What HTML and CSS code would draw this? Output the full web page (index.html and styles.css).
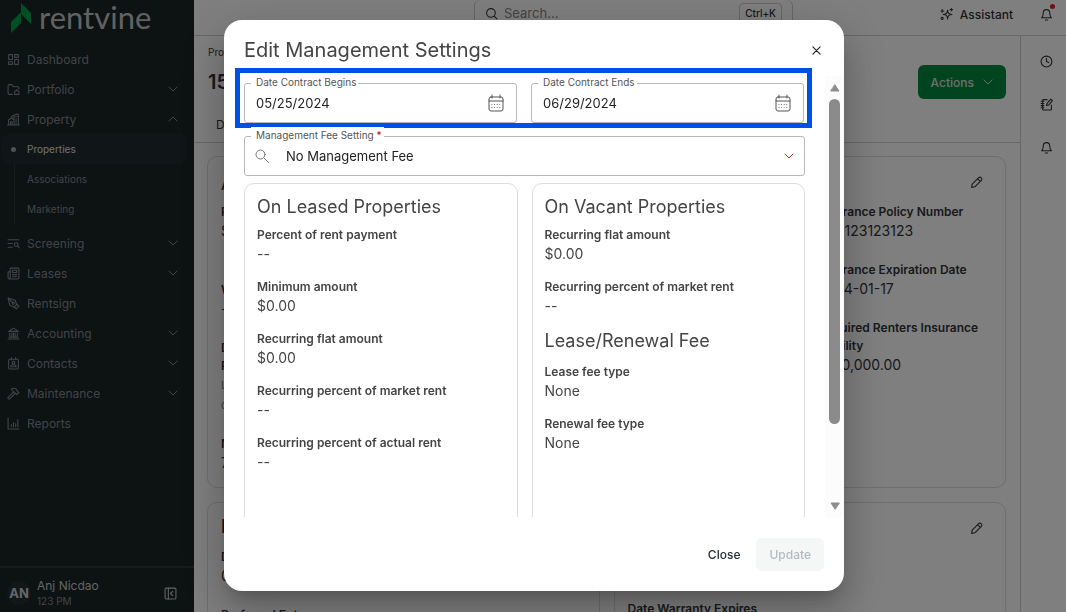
FILE: index.html
```
<!DOCTYPE html>
<html lang="en">
<head>
    <meta charset="UTF-8">
    <meta name="viewport" content="width=device-width, initial-scale=1.0">
    <title>Rentvine - Properties</title>
    <link rel="stylesheet" href="styles.css">
</head>
<body>
    <div class="app">
        <aside class="sidebar">
            <div class="logo">
                <svg class="logo-mark" width="22" height="32" viewBox="0 0 22 32"><path fill="#00a047" d="M0 20 10 10v11L0 31zM10 1l10 10v11L10 12z"/></svg>
                <span>rentvine</span>
            </div>
            <nav class="nav">
                <a class="nav-item" href="#">
                    <svg class="icon" viewBox="0 0 24 24"><path d="M3 3h7v9H3zM14 3h7v5h-7zM14 12h7v9h-7zM3 16h7v5H3z"/></svg>
                    <span>Dashboard</span>
                </a>
                <a class="nav-item" href="#">
                    <svg class="icon" viewBox="0 0 24 24"><path d="M10 21H4a2 2 0 0 1-2-2V5a2 2 0 0 1 2-2h5l3 4h8a2 2 0 0 1 2 2v2M14 16l4-3.500 4 3.500v5h-8z"/></svg>
                    <span>Portfolio</span>
                    <svg class="chevron" viewBox="0 0 10 6"><path d="m1 1 4 4 4-4"/></svg>
                </a>
                <a class="nav-item" href="#">
                    <svg class="icon" viewBox="0 0 24 24"><path d="M1 22h22M3 22V13l5-4 5 4v9M9 8V6l9-4 3 1v19M16 7h2M16 11h2M16 15h2M16 19h2M6.500 22v-6h3v6M13 5v6"/></svg>
                    <span>Property</span>
                    <svg class="chevron" viewBox="0 0 10 6"><path d="m1 5 4-4 4 4"/></svg>
                </a>
                <div class="subnav">
                    <a class="subnav-item active" href="#">Properties</a>
                    <a class="subnav-item" href="#">Associations</a>
                    <a class="subnav-item" href="#">Marketing</a>
                </div>
                <a class="nav-item" href="#">
                    <svg class="icon" viewBox="0 0 24 24"><path d="M2 5h20M2 12h8M2 19h8"/><circle cx="17" cy="14" r="3.500"/><path d="m19.500 16.500 3 3.500"/></svg>
                    <span>Screening</span>
                    <svg class="chevron" viewBox="0 0 10 6"><path d="m1 1 4 4 4-4"/></svg>
                </a>
                <a class="nav-item" href="#">
                    <svg class="icon" viewBox="0 0 24 24"><path d="M6 2h14a2 2 0 0 1 2 2v16a2 2 0 0 1-2 2H4a2 2 0 0 1-2-2V9h3M6 2v17a2 2 0 0 1-3 2M10 6h8v4h-8zM10 14h8M10 18h8"/></svg>
                    <span>Leases</span>
                    <svg class="chevron" viewBox="0 0 10 6"><path d="m1 1 4 4 4-4"/></svg>
                </a>
                <a class="nav-item" href="#">
                    <svg class="icon" viewBox="0 0 24 24"><path d="m2 2 13 4 3 8-5 5-8-4zM2 2l8 8M18 13l4 4-5 5-4-4"/><circle cx="11.500" cy="11.500" r="2"/></svg>
                    <span>Rentsign</span>
                </a>
                <a class="nav-item" href="#">
                    <svg class="icon" viewBox="0 0 24 24"><path d="M2 22h20M3 8l9-6 9 6zM5 11v8M9 11v8M12 11v8M15 11v8M19 11v8M4 19h16"/></svg>
                    <span>Accounting</span>
                    <svg class="chevron" viewBox="0 0 10 6"><path d="m1 1 4 4 4-4"/></svg>
                </a>
                <a class="nav-item" href="#">
                    <svg class="icon" viewBox="0 0 24 24"><rect x="3" y="4" width="18" height="18" rx="2"/><path d="M8 1v4M16 1v4M7 18c0-5 10-5 10 0z"/><circle cx="12" cy="10.500" r="2.500"/></svg>
                    <span>Contacts</span>
                    <svg class="chevron" viewBox="0 0 10 6"><path d="m1 1 4 4 4-4"/></svg>
                </a>
                <a class="nav-item" href="#">
                    <svg class="icon" viewBox="0 0 24 24"><path d="m12 9-9.500 9.500a2 2 0 0 0 3 3L15 12M8 4c4-3 8-2 10 1l1 3 3 2-4 4-3-3-2-1-2-3c-1-2-2-2-3-3z"/></svg>
                    <span>Maintenance</span>
                    <svg class="chevron" viewBox="0 0 10 6"><path d="m1 1 4 4 4-4"/></svg>
                </a>
                <a class="nav-item" href="#">
                    <svg class="icon" viewBox="0 0 24 24"><path d="M2 2v20h20M8 18v-4M12 18V10M16 18v-6M20 18V5"/></svg>
                    <span>Reports</span>
                </a>
            </nav>
            <div class="user">
                <span class="avatar">AN</span>
                <div class="user-info">
                    <div class="user-name">Anj Nicdao</div>
                    <div class="user-time">123 PM</div>
                </div>
                <button class="icon-btn collapse" aria-label="Collapse menu">
                    <svg class="icon" viewBox="0 0 24 24"><rect x="2" y="2" width="20" height="20" rx="2"/><path d="M8 2v20M16 8l-4 4 4 4"/></svg>
                </button>
            </div>
        </aside>

        <div class="page">
            <header class="topbar">
                <div class="search">
                    <svg class="icon" viewBox="0 0 24 24"><circle cx="11" cy="11" r="8"/><path d="m17 17 5 5"/></svg>
                    <input type="search" placeholder="Search..." aria-label="Search">
                    <kbd>Ctrl+K</kbd>
                </div>
                <div class="topbar-right">
                    <button class="assistant">
                        <svg class="icon" viewBox="0 0 24 24"><path d="M14 4c.500 6 2 7.500 8 8-6 .500-7.500 2-8 8-.500-6-2-7.500-8-8 6-.500 7.500-2 8-8zM4 3v5M2 5.500h5M21 1v4M19 3h4"/><circle cx="4" cy="19" r="2"/></svg>
                        Assistant
                    </button>
                    <button class="icon-btn bell" aria-label="Notifications">
                        <svg class="icon" viewBox="0 0 24 24"><path d="M3 18c2-2 3-4 3-9a6 6 0 0 1 12 0c0 5 1 7 3 9zM10 22h4"/></svg>
                        <span class="dot"></span>
                    </button>
                </div>
            </header>
            <div class="workspace">
                <main class="main">
                    <div class="page-head">
                        <div class="crumbs">Properties</div>
                        <div class="title-row">
                            <h1>1543 Meadow Lane</h1>
                            <button class="actions">Actions
                                <svg class="chevron" viewBox="0 0 10 6"><path d="m1 1 4 4 4-4"/></svg>
                            </button>
                        </div>
                        <div class="tabs"><a href="#">Details</a></div>
                    </div>
                    <div class="cards">
                        <section class="card">
                            <h2>About</h2>
                            <dl>
                                <div class="type"><dt>Property Type</dt><dd>Single Family</dd></div>
                                <div><dt>Warranty</dt><dd>--</dd></div>
                                <div class="pets"><dt>Dogs and<br>Pets Allowed</dt><dd>Large dogs</dd><dd>cats</dd></div>
                                <div><dt>Notes</dt><dd>7 days</dd></div>
                            </dl>
                        </section>
                        <section class="card">
                            <dl class="second">
                                <div><dt>Insurance Policy Number</dt><dd>000123123123</dd></div>
                                <div><dt>Insurance Expiration Date</dt><dd>2024-01-17</dd></div>
                                <div><dt>Required Renters Insurance Liability</dt><dd>$100,000.00</dd></div>
                            </dl>
                            <button class="icon-btn edit" aria-label="Edit insurance">
                                <svg class="icon" viewBox="0 0 24 24"><path d="m3 21 1-6L16 3c3-3 8 2 5 5L9 20zM14 5l5 5"/></svg>
                            </button>
                        </section>
                        <section class="card card-low">
                            <h2>Building</h2>
                            <dl>
                                <div><dt>Date Acquired</dt><dd>01/01/2020</dd></div>
                                <div><dt>Preferred Entry</dt></div>
                            </dl>
                        </section>
                        <section class="card card-low">
                            <h2>Warranty</h2>
                            <dl class="warranty">
                                <div><dt>Provider</dt><dd>--</dd></div>
                                <div><dt>Date Warranty Expires</dt></div>
                            </dl>
                            <button class="icon-btn edit" aria-label="Edit warranty">
                                <svg class="icon" viewBox="0 0 24 24"><path d="m3 21 1-6L16 3c3-3 8 2 5 5L9 20zM14 5l5 5"/></svg>
                            </button>
                        </section>
                    </div>
                </main>
                <aside class="rail">
                    <button class="icon-btn" aria-label="History">
                        <svg class="icon" viewBox="0 0 24 24"><circle cx="12" cy="12" r="10"/><path d="M12 6v6l4 2"/></svg>
                    </button>
                    <button class="icon-btn" aria-label="Notes">
                        <svg class="icon" viewBox="0 0 24 24"><path d="M13 3H6a1 1 0 0 0-1 1v17a1 1 0 0 0 1 1h14a1 1 0 0 0 1-1v-8M2 6h5M2 10h5M2 14h5M2 18h5M12 14l1-4 7-8 3 3-7 8z"/></svg>
                    </button>
                    <button class="icon-btn" aria-label="Reminders">
                        <svg class="icon" viewBox="0 0 24 24"><path d="M3 18c2-2 3-4 3-9a6 6 0 0 1 12 0c0 5 1 7 3 9zM10 22h4"/></svg>
                    </button>
                </aside>
            </div>
        </div>
    </div>

    <div class="overlay">
        <div class="modal" role="dialog" aria-labelledby="modal-title">
            <div class="modal-header">
                <h2 id="modal-title">Edit Management Settings</h2>
                <button class="icon-btn close-x" aria-label="Close dialog">
                    <svg viewBox="0 0 10 10"><path d="m1 1 8 8M9 1 1 9"/></svg>
                </button>
            </div>
            <div class="modal-body">
                <form class="modal-content">
                    <div class="date-row">
                        <div class="field">
                            <label for="begins">Date Contract Begins</label>
                            <input type="text" id="begins" value="05/25/2024">
                            <svg class="calendar" viewBox="0 0 16 18"><rect x="1" y="3" width="14" height="14" rx="2"/><path d="M1 7h14M4 1v3M12 1v3"/><path class="dots" d="M4 10.500h8M4 13.500h8"/></svg>
                        </div>
                        <div class="field">
                            <label for="ends">Date Contract Ends</label>
                            <input type="text" id="ends" value="06/29/2024">
                            <svg class="calendar" viewBox="0 0 16 18"><rect x="1" y="3" width="14" height="14" rx="2"/><path d="M1 7h14M4 1v3M12 1v3"/><path class="dots" d="M4 10.500h8M4 13.500h8"/></svg>
                        </div>
                    </div>
                    <div class="field fee">
                        <label for="fee">Management Fee Setting <span class="required">*</span></label>
                        <svg class="magnifier" viewBox="0 0 14 14"><circle cx="5.500" cy="5.500" r="4.500"/><path d="m9 9 4.500 4.500"/></svg>
                        <select id="fee"><option>No Management Fee</option></select>
                        <svg class="chevron" viewBox="0 0 10 6"><path d="m1 1 4 4 4-4"/></svg>
                    </div>
                    <div class="panels">
                        <section class="panel">
                            <h3>On Leased Properties</h3>
                            <dl>
                                <div><dt>Percent of rent payment</dt><dd>--</dd></div>
                                <div><dt>Minimum amount</dt><dd>$0.00</dd></div>
                                <div><dt>Recurring flat amount</dt><dd>$0.00</dd></div>
                                <div><dt>Recurring percent of market rent</dt><dd>--</dd></div>
                                <div><dt>Recurring percent of actual rent</dt><dd>--</dd></div>
                            </dl>
                        </section>
                        <section class="panel">
                            <h3>On Vacant Properties</h3>
                            <dl>
                                <div><dt>Recurring flat amount</dt><dd>$0.00</dd></div>
                                <div><dt>Recurring percent of market rent</dt><dd>--</dd></div>
                            </dl>
                            <h3 class="renewal">Lease/Renewal Fee</h3>
                            <dl>
                                <div><dt>Lease fee type</dt><dd>None</dd></div>
                                <div><dt>Renewal fee type</dt><dd>None</dd></div>
                            </dl>
                        </section>
                    </div>
                </form>
                <div class="scrollbar">
                    <svg viewBox="0 0 10 8"><path d="M5 1 9 7H1z"/></svg>
                    <div class="track"><div class="thumb"></div></div>
                    <svg viewBox="0 0 10 8"><path d="M5 7 1 1h8z"/></svg>
                </div>
            </div>
            <div class="modal-footer">
                <button class="btn">Close</button>
                <button class="btn btn-update" disabled>Update</button>
            </div>
        </div>
    </div>
</body>
</html>
```

FILE: styles.css
```
* {
    box-sizing: border-box;
}
body {
    margin: 0;
    font-family: Inter, "Liberation Sans", sans-serif;
    font-size: 13px;
    color: #303336;
    background-color: #fff;
    overflow: hidden;
}
h1, h2, h3, dl, dd {
    margin: 0;
    font-weight: 400;
}
a {
    color: inherit;
    text-decoration: none;
}
button, input, select {
    font: inherit;
    color: inherit;
    border: 0;
    background: none;
    padding: 0;
}
svg {
    flex: none;
    fill: none;
    stroke: currentColor;
    stroke-linecap: round;
    stroke-linejoin: round;
}
.icon {
    width: 13px;
    height: 13px;
    stroke-width: 2;
}
.chevron {
    width: 10px;
    height: 6px;
    stroke-width: 1;
}
.icon-btn {
    display: flex;
    align-items: center;
    justify-content: center;
}
.app {
    display: flex;
    height: 100vh;
}

/* sidebar */
.sidebar {
    display: flex;
    flex-direction: column;
    flex: none;
    width: 194px;
    background-color: #1b2426;
    color: #818991;
}
.logo {
    display: flex;
    align-items: center;
    gap: 6px;
    height: 36px;
    padding: 0 11px;
    color: #c4c4c4;
    font: 31px/36px Lato, sans-serif;
}
.logo span {
    padding-bottom: 2px;
}
.logo-mark {
    stroke: none;
}
.nav {
    flex: 1;
    padding-top: 8px;
    font-size: 12px;
}
.nav-item {
    display: flex;
    align-items: center;
    gap: 7px;
    height: 30px;
    padding: 0 16px 0 7px;
}
.nav-item .chevron {
    margin-left: auto;
}
.subnav {
    position: relative;
    margin-bottom: 4px;
    font-size: 10px;
}
.subnav::before {
    content: '';
    position: absolute;
    top: 0;
    bottom: 0;
    left: 14px;
    border-left: 1px solid #30393c;
}
.subnav-item {
    position: relative;
    display: flex;
    align-items: center;
    height: 30px;
    padding-left: 27px;
}
.subnav-item.active {
    margin: 0 7px 0 1px;
    padding-left: 26px;
    border-radius: 8px;
    background-color: #202a2e;
    color: #e0e0e0;
}
.subnav-item.active::before {
    content: '';
    position: absolute;
    left: 10px;
    width: 5px;
    height: 5px;
    border-radius: 50%;
    background-color: #a0a5a8;
}
.user {
    display: flex;
    align-items: center;
    gap: 6px;
    height: 46px;
    padding: 6px 17px 0 7px;
    border-top: 2px solid #2f3739;
}
.avatar {
    width: 24px;
    height: 24px;
    border-radius: 50%;
    background-color: #242f33;
    color: #cfcfcf;
    font-weight: 700;
    line-height: 24px;
    text-align: center;
}
.user-name {
    color: #c8c8c8;
    font-size: 12px;
    line-height: 16px;
}
.user-time {
    font-size: 10px;
    line-height: 14px;
}
.collapse {
    margin-left: auto;
    color: #c8c8c8;
}

/* page behind the dialog */
.page {
    display: flex;
    flex: 1;
    flex-direction: column;
    min-width: 0;
}
.topbar {
    display: flex;
    flex: none;
    justify-content: flex-end;
    height: 36px;
    border-bottom: 1px solid #d0d0d0;
}
.search {
    display: flex;
    align-items: center;
    gap: 6px;
    width: 319px;
    height: 27px;
    padding: 0 10px;
    border: 1px solid #ccc;
    border-top: 0;
    border-radius: 6px;
}
.search input {
    flex: 1;
    min-width: 0;
}
.search input::placeholder {
    color: #888;
}
kbd {
    padding: 2px 5px;
    border: 1px solid #ccc;
    border-radius: 4px;
    font: 500 10px/14px Inter, sans-serif;
}
.topbar-right {
    display: flex;
    align-items: center;
    justify-content: flex-end;
    gap: 27px;
    width: 273px;
    height: 28px;
    padding-right: 13px;
}
.assistant {
    display: flex;
    align-items: center;
    gap: 7px;
    font-size: 12px;
    font-weight: 500;
}
.bell {
    position: relative;
}
.dot {
    position: absolute;
    top: -4px;
    right: -2px;
    width: 5px;
    height: 5px;
    border-radius: 50%;
    background-color: #e02020;
}
.workspace {
    display: flex;
    flex: 1;
    min-height: 0;
}
.main {
    flex: 1;
    overflow: hidden;
    min-width: 0;
}
.rail {
    display: flex;
    flex-direction: column;
    gap: 30px;
    flex: none;
    width: 46px;
    padding: 19px 13px 0 0;
    border-left: 1px solid #d0d0d0;
    align-items: flex-end;
}
.page-head {
    height: 107px;
    padding: 8px 14px 0;
    border-bottom: 1px solid #d0d0d0;
}
.crumbs {
    font-size: 10px;
    line-height: 16px;
}
.title-row {
    display: flex;
    align-items: center;
    justify-content: space-between;
    height: 44px;
}
.title-row h1 {
    font-size: 20px;
    font-weight: 600;
}
.actions {
    display: flex;
    align-items: center;
    gap: 9px;
    height: 34px;
    padding: 0 13px;
    border-radius: 6px;
    background-color: #008a3e;
    color: #ddd;
    font-size: 12px;
    font-weight: 500;
}
.tabs {
    padding: 13px 8px;
    font-size: 12px;
}
.cards {
    display: grid;
    grid-template-columns: 1fr 1fr;
    gap: 14px;
    padding: 13px 14px 0 13px;
}
.card {
    position: relative;
    height: 332px;
    padding: 18px 13px;
    border: 1px solid #ddd;
    border-radius: 10px;
}
.card h2 {
    font-size: 13px;
    font-weight: 600;
    line-height: 20px;
}
.card dl {
    display: grid;
    gap: 20px;
    padding-top: 8px;
}
.card dt {
    font-size: 12px;
    font-weight: 600;
    line-height: 18px;
}
.card dd {
    font-size: 14px;
    line-height: 20px;
}
.card .type {
    padding-bottom: 20px;
}
.card .pets dd {
    color: #888;
    font-size: 11px;
}
.card .second {
    width: 174px;
    margin-left: auto;
    padding-top: 28px;
}
.card-low {
    padding-top: 14px;
}
.card-low h2 {
    font-size: 18px;
}
.card-low dl {
    padding-top: 11px;
}
.card-low .warranty {
    padding-top: 5px;
}
.edit {
    position: absolute;
    top: 19px;
    right: 22px;
}

/* dialog */
.overlay {
    position: fixed;
    inset: 0;
    display: flex;
    justify-content: center;
    padding: 20px 22px 21px 24px;
    background-color: rgba(0, 0, 0, 0.5);
}
.modal {
    display: flex;
    flex-direction: column;
    width: 620px;
    border-radius: 18px;
    background-color: #fff;
    box-shadow: 0 11px 15px -7px rgba(0, 0, 0, 0.2), 0 24px 38px 3px rgba(0, 0, 0, 0.14), 0 9px 46px 8px rgba(0, 0, 0, 0.12);
    color: #444;
}
.modal-header {
    display: flex;
    align-items: center;
    justify-content: space-between;
    flex: none;
    height: 48px;
    padding: 12px 23px 0 20px;
}
.modal-header h2 {
    font-size: 20px;
    line-height: 28px;
}
.close-x svg {
    width: 9px;
    height: 9px;
    stroke-width: 1.25;
    color: #222;
}
.modal-body {
    display: flex;
    flex: 1;
    min-height: 0;
}
.modal-content {
    flex: 1;
    overflow: hidden;
    padding: 0 13px 0 11px;
}
.date-row {
    display: grid;
    grid-template-columns: 1fr 1fr;
    gap: 14px;
    padding: 10px 3px 0 4px;
    border: 5px solid #0050e6;
}
.field {
    position: relative;
    display: flex;
    align-items: center;
    height: 40px;
    padding: 0 12px 0 11px;
    border: 1px solid #b8b8b8;
    border-radius: 3px;
    color: #222;
}
.field label {
    position: absolute;
    top: -10px;
    left: 6px;
    padding: 0 2px 0 5px;
    background-color: #fff;
    color: #555;
    font-size: 10px;
    line-height: 16px;
}
.field input, .field select {
    flex: 1;
    min-width: 0;
    appearance: none;
}
.calendar {
    width: 16px;
    height: 18px;
    color: #555;
}
.calendar .dots {
    stroke-dasharray: 0 2.6;
}
.fee {
    margin: 8px 7px 7px 9px;
    padding: 0 10px;
}
.fee select {
    padding-left: 17px;
}
.fee .chevron {
    color: #9c4430;
}
.required {
    color: #c00;
}
.magnifier {
    width: 14px;
    height: 14px;
    color: #777;
}
.panels {
    display: grid;
    grid-template-columns: 1fr 1fr;
    gap: 14px;
    margin: 0 7px 0 9px;
}
.panel {
    height: 400px;
    padding: 11px 12px;
    border: 1px solid #ddd;
    border-radius: 10px;
}
.panel h3 {
    padding-bottom: 6px;
    font-size: 18px;
    line-height: 24px;
}
.panel .renewal {
    padding-bottom: 9px;
}
.panel dl > div {
    padding-bottom: 13px;
}
.panel dt {
    font-size: 12px;
    font-weight: 600;
    line-height: 19px;
}
.panel dd {
    font-size: 14px;
    line-height: 20px;
}
.scrollbar {
    display: flex;
    flex-direction: column;
    align-items: center;
    justify-content: space-between;
    width: 19px;
    margin-top: 8px;
    padding: 8px 0 7px;
    background-color: #fcfcfc;
}
.scrollbar svg {
    width: 10px;
    height: 8px;
    fill: #8b8b8b;
    stroke: #8b8b8b;
}
.track {
    flex: 1;
    width: 11px;
    margin: 7px 0;
}
.thumb {
    height: 82%;
    border-radius: 6px;
    background-color: #8b8b8b;
}
.modal-footer {
    display: flex;
    align-items: center;
    justify-content: flex-end;
    flex: none;
    gap: 3px;
    height: 74px;
    padding-right: 20px;
}
.btn {
    height: 33px;
    padding: 0 13px;
    border-radius: 6px;
    color: #222b30;
    font-size: 12px;
    font-weight: 500;
}
.btn-update {
    background-color: #f4f7f6;
    color: #b0bcbe;
}
```
